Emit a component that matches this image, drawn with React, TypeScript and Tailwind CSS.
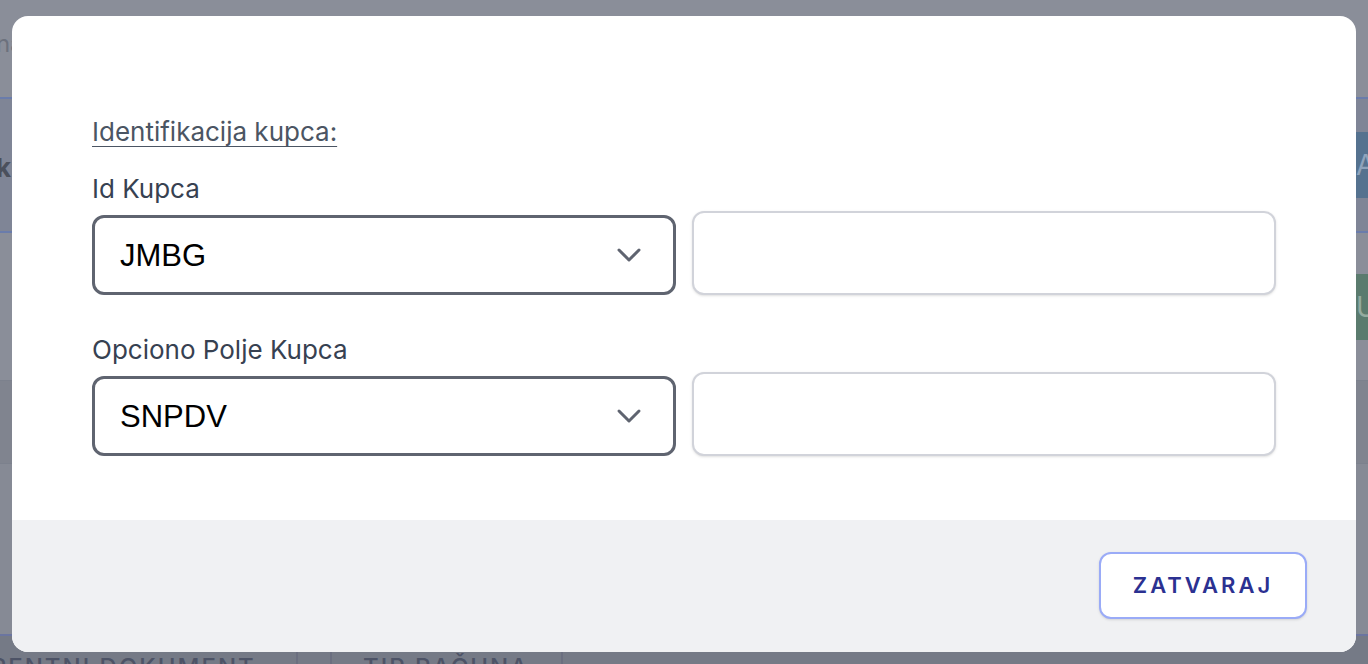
import React from "react";

function Chevron() {
  return (
    <svg width="26" height="18" viewBox="0 0 26 18" fill="none" stroke="#5f6470" strokeWidth="3" strokeLinecap="round" strokeLinejoin="round">
      <path d="M3 4l10 10 10-10" />
    </svg>
  );
}

function Row({ label, value }: { label: string; value: string }) {
  return (
    <div className="flex flex-col">
      <div className="text-[26px] leading-[32px] text-[#374151]">{label}</div>
      <div className="mt-[6px] grid grid-cols-2 gap-[16px] items-end">
        <div className="h-[80px] border-[3px] border-[#5f6470] rounded-[12px] flex items-center justify-between pl-[25px] pr-[31px]">
          <span className="text-[31px] text-black mt-[2px]" style={{ fontFamily: '"Liberation Sans", Arial, sans-serif' }}>{value}</span>
          <Chevron />
        </div>
        <div className="h-[84px] border-2 border-[#d1d3da] rounded-[12px] bg-white shadow-sm" />
      </div>
    </div>
  );
}

export default function App() {
  return (
    <div className="relative w-[1368px] h-[664px] overflow-hidden bg-[#8a8e99]" style={{ fontFamily: 'Inter, "Noto Sans", sans-serif' }}>
      {/* background page (dimmed) */}
      <div className="flex flex-col h-full">
        <div className="shrink-0 h-[97px] pt-[26px] text-[24px] text-[#6c717d] -ml-[4px]">na</div>
        <div className="shrink-0 h-[136px] border-y-2 border-[#6a7cab] bg-[#7f8596] flex items-center justify-between">
          <span className="text-[26px] font-bold text-[#4b505c] -ml-[4px] mt-[4px]">ku</span>
          <div className="w-[12px] h-[66px] bg-[#55728f] text-[#8fa3bb] text-[28px] flex items-center overflow-hidden">A</div>
        </div>
        <div className="shrink-0 h-[147px] flex items-center justify-end">
          <div className="w-[12px] h-[66px] bg-[#5b7b6e] text-[#94ab9f] text-[28px] flex items-center overflow-hidden">U</div>
        </div>
        <div className="shrink-0 h-[83px] border-t border-[#7c818d] bg-[#80848f]" />
        <div className="shrink-0 h-[171px] border-t border-[#7c818d] bg-[#868a95]" />
        <div className="shrink-0 h-[60px] border-t-2 border-[#6b75a0] bg-[#757a86] flex text-[#4d5366] text-[24px] font-medium tracking-[2px] leading-none">
          <div className="w-[298px] border-r-2 border-[#6b6f80] h-full pt-[20px] whitespace-nowrap overflow-hidden">
            <span className="-ml-[76px] inline-block">REFERENTNI DOKUMENT</span>
          </div>
          <div className="w-[34px] border-r-2 border-[#6b6f80] h-full" />
          <div className="w-[231px] border-r-2 border-[#6b6f80] h-full pt-[20px] pl-[31px] whitespace-nowrap">TIP RAČUNA</div>
        </div>
      </div>

      {/* modal */}
      <div className="absolute left-[12px] top-[16px] w-[1344px] h-[636px] bg-white rounded-[16px] overflow-hidden flex flex-col">
        <div className="flex-1 px-[80px] pt-[100px]">
          <div className="text-[26px] leading-[32px] text-[#4b5563] underline underline-offset-[5px] decoration-1">Identifikacija kupca:</div>
          <div className="mt-[25px]">
            <Row label="Id Kupca" value="JMBG" />
          </div>
          <div className="mt-[39px]">
            <Row label="Opciono Polje Kupca" value="SNPDV" />
          </div>
        </div>
        <div className="h-[132px] bg-[#f0f1f3] flex items-start justify-end pr-[49px] pt-[32px]">
          <button className="w-[208px] h-[67px] bg-white border-2 border-[#9aabf7] rounded-[12px] text-[#2b3191] text-[22px] font-semibold tracking-[3px] shadow-sm">
            ZATVARAJ
          </button>
        </div>
      </div>
    </div>
  );
}
